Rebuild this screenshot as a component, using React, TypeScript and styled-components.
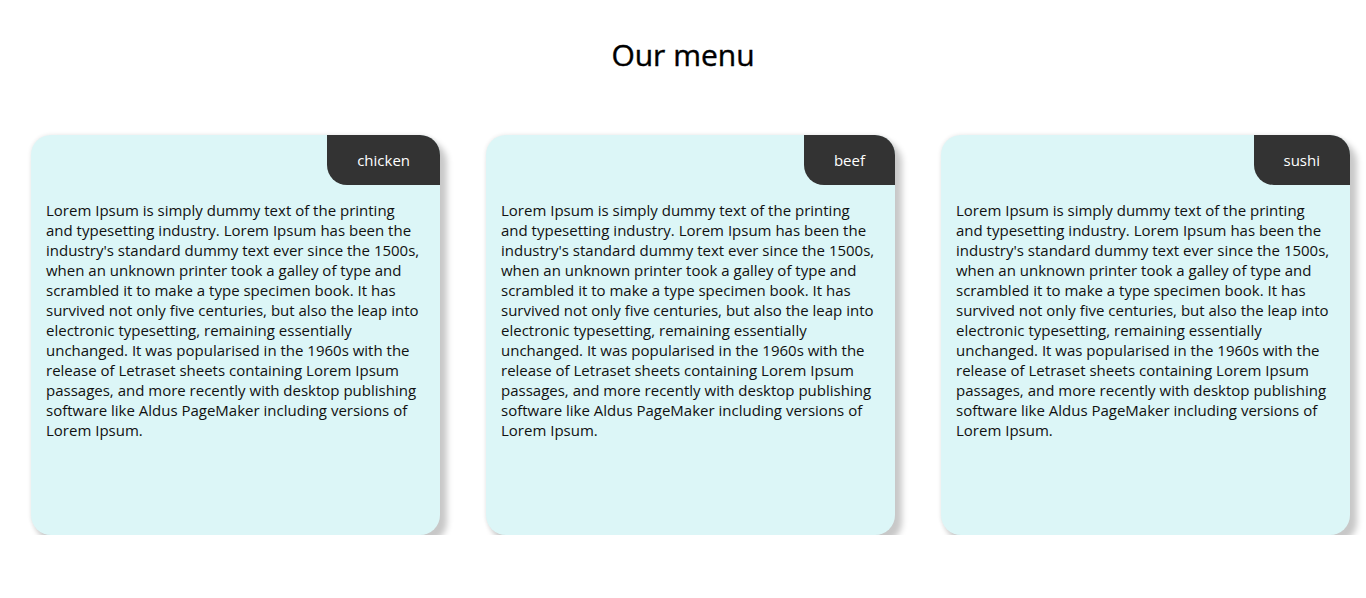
import React from "react";
import styled, { createGlobalStyle } from "styled-components";

const Global = createGlobalStyle`
  html, body { margin: 0; padding: 0; background: #fff; }
  body { font-family: "Open Sans", sans-serif; color: #222; }
`;

const Page = styled.div`
  padding-top: 34px;
`;

const Title = styled.h1`
  margin: 0;
  text-align: center;
  font-size: 30px;
  font-weight: 500;
  color: #000;
  line-height: 42px;
  -webkit-text-stroke: 0.4px #000;
`;

const Grid = styled.div`
  display: flex;
  gap: 46px;
  padding: 59px 0 0 31px;
`;

const Card = styled.div`
  width: 409px;
  height: 400px;
  box-sizing: border-box;
  background: #dcf6f7;
  border-radius: 20px;
  box-shadow: 6px 7px 6px 1px #c8c8c8, 0 0 4px #e4e4e4;
  display: flex;
  flex-direction: column;
`;

const Tag = styled.div`
  align-self: flex-end;
  height: 50px;
  padding: 0 30px;
  display: flex;
  align-items: center;
  background: #333;
  color: #fff;
  font-size: 15px;
  border-radius: 0 20px 0 20px;
`;

const Body = styled.p`
  margin: 15px 15px 0;
  font-size: 15px;
  line-height: 20px;
  color: #111;
`;

const text =
  "Lorem Ipsum is simply dummy text of the printing and typesetting industry. Lorem Ipsum has been the industry's standard dummy text ever since the 1500s, when an unknown printer took a galley of type and scrambled it to make a type specimen book. It has survived not only five centuries, but also the leap into electronic typesetting, remaining essentially unchanged. It was popularised in the 1960s with the release of Letraset sheets containing Lorem Ipsum passages, and more recently with desktop publishing software like Aldus PageMaker including versions of Lorem Ipsum.";

export default function App() {
  return (
    <Page>
      <Global />
      <Title>Our menu</Title>
      <Grid>
        {["chicken", "beef", "sushi"].map((t) => (
          <Card key={t}>
            <Tag>{t}</Tag>
            <Body>{text}</Body>
          </Card>
        ))}
      </Grid>
    </Page>
  );
}
